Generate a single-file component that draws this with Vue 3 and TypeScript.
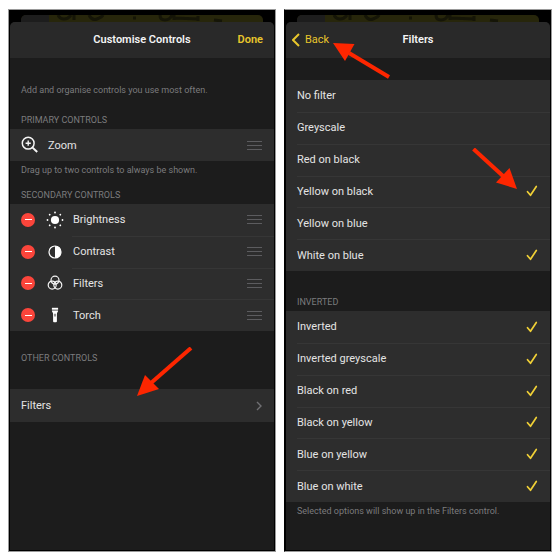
<script setup lang="ts">
import { ref } from 'vue'

interface Control {
  name: string
  icon: 'brightness' | 'contrast' | 'filters' | 'torch'
}

interface FilterOption {
  name: string
  selected: boolean
}

const secondary: Control[] = [
  { name: 'Brightness', icon: 'brightness' },
  { name: 'Contrast', icon: 'contrast' },
  { name: 'Filters', icon: 'filters' },
  { name: 'Torch', icon: 'torch' },
]

const standard = ref<FilterOption[]>([
  { name: 'No filter', selected: false },
  { name: 'Greyscale', selected: false },
  { name: 'Red on black', selected: false },
  { name: 'Yellow on black', selected: true },
  { name: 'Yellow on blue', selected: false },
  { name: 'White on blue', selected: true },
])

const inverted = ref<FilterOption[]>([
  { name: 'Inverted', selected: true },
  { name: 'Inverted greyscale', selected: true },
  { name: 'Black on red', selected: true },
  { name: 'Black on yellow', selected: true },
  { name: 'Blue on yellow', selected: true },
  { name: 'Blue on white', selected: true },
])

const rays = [0, 45, 90, 135, 180, 225, 270, 315]
</script>

<template>
  <main class="page">
    <section class="phone phone-left">
      <div class="backdrop" aria-hidden="true">
        <svg class="backdrop-art" viewBox="0 0 242 8" preserveAspectRatio="none">
          <path d="M0 0h28v8H0z" fill="#1d1d1d" />
          <path d="M37 0q2 4 6 4t7-4M53 0v5M68 0q3 6 8 4t6-4M112 3h3M139 0q0 5 5 5t7-5M153 0v5M153 3l24 1M177 1v5M193 5l8 1" fill="none" stroke="#151507" stroke-width="3" />
        </svg>
      </div>
      <div class="sheet">
        <header class="bar">
          <h1 class="title">Customise Controls</h1>
          <button class="bar-button done" type="button">Done</button>
        </header>

        <p class="note intro">Add and organise controls you use most often.</p>

        <h2 class="label primary-label">Primary controls</h2>
        <div class="group">
          <div class="row single">
            <svg class="zoom-icon" viewBox="0 0 18 18" aria-hidden="true">
              <circle cx="7.2" cy="7.2" r="5.9" />
              <path d="M11.6 11.6l4.6 4.4" stroke-width="2" />
              <path d="M7.2 4.6v5.2M4.6 7.2h5.2" stroke-width="1.4" />
            </svg>
            <span class="name">Zoom</span>
            <button class="grip" type="button" aria-label="Reorder Zoom"><i></i><i></i><i></i></button>
          </div>
        </div>
        <p class="note">Drag up to two controls to always be shown.</p>

        <h2 class="label">Secondary controls</h2>
        <ul class="group secondary">
          <li v-for="c in secondary" :key="c.name" class="row">
            <button class="remove" type="button" :aria-label="'Remove ' + c.name"><i></i></button>
            <svg class="icon" viewBox="0 0 18 18" aria-hidden="true">
              <g v-if="c.icon === 'brightness'" fill="#fff">
                <circle cx="9" cy="9" r="4.1" />
                <circle v-for="a in rays" :key="a" cx="9" cy="1.5" r="0.9" :transform="`rotate(${a} 9 9)`" />
              </g>
              <g v-else-if="c.icon === 'contrast'">
                <circle cx="9" cy="9" r="6" fill="none" stroke="#fff" stroke-width="1.2" />
                <path d="M9 3a6 6 0 0 1 0 12z" fill="#fff" />
              </g>
              <g v-else-if="c.icon === 'filters'" fill="none" stroke="#f4f4f4" stroke-width="1.2">
                <circle cx="9" cy="6.2" r="4" />
                <circle cx="6.2" cy="11.1" r="4" />
                <circle cx="11.8" cy="11.1" r="4" />
              </g>
              <g v-else fill="#fff">
                <path d="M5.900 1.800h6.200v1.900H5.900z" />
                <path d="M5.900 4.500h6.200c0 1.600-1.200 2.100-1.200 3.400v7.400q0 .9-.9.9H8q-.9 0-.9-.9V7.900c0-1.300-1.200-1.800-1.200-3.400z" />
                <path d="M8.500 7.800h1v2.800h-1z" fill="#2d2d2d" />
              </g>
            </svg>
            <span class="name">{{ c.name }}</span>
            <button class="grip" type="button" :aria-label="'Reorder ' + c.name"><i></i><i></i><i></i></button>
          </li>
        </ul>

        <h2 class="label other-label">Other controls</h2>
        <a class="group row link" href="#filters">
          <span class="name">Filters</span>
          <svg class="chevron" viewBox="0 0 6 10" aria-hidden="true"><path d="M1 1l4 4-4 4" /></svg>
        </a>
      </div>
      <svg class="arrow arrow-link" viewBox="0 0 56 50" aria-hidden="true">
        <path class="shaft" d="M54 1L14 36" />
        <path class="head" d="M0 49L8 28l14 14z" />
      </svg>
    </section>

    <section id="filters" class="phone phone-right">
      <div class="backdrop" aria-hidden="true">
        <svg class="backdrop-art" viewBox="0 0 242 8" preserveAspectRatio="none">
          <path d="M0 0h28v8H0z" fill="#1d1d1d" />
          <path d="M37 0q2 4 6 4t7-4M53 0v5M68 0q3 6 8 4t6-4M112 3h3M139 0q0 5 5 5t7-5M153 0v5M153 3l24 1M177 1v5M193 5l8 1" fill="none" stroke="#151507" stroke-width="3" />
        </svg>
      </div>
      <div class="sheet">
        <header class="bar">
          <button class="bar-button back" type="button">
            <svg class="back-icon" viewBox="0 0 8 14" aria-hidden="true"><path d="M7 1L1 7l6 6" /></svg>
            Back
          </button>
          <h1 class="title">Filters</h1>
        </header>

        <ul class="group options first">
          <li v-for="o in standard" :key="o.name" class="row">
            <label class="option">
              <span class="name">{{ o.name }}</span>
              <input v-model="o.selected" class="tick" type="checkbox" />
              <svg v-if="o.selected" class="check" viewBox="0 0 12 12" aria-hidden="true"><path d="M1.500 6.700L4.500 10.300 10.300 1.500" /></svg>
            </label>
          </li>
        </ul>

        <h2 class="label inverted-label">Inverted</h2>
        <ul class="group options">
          <li v-for="o in inverted" :key="o.name" class="row">
            <label class="option">
              <span class="name">{{ o.name }}</span>
              <input v-model="o.selected" class="tick" type="checkbox" />
              <svg v-if="o.selected" class="check" viewBox="0 0 12 12" aria-hidden="true"><path d="M1.500 6.700L4.500 10.300 10.300 1.500" /></svg>
            </label>
          </li>
        </ul>
        <p class="note">Selected options will show up in the Filters control.</p>
      </div>
      <svg class="arrow arrow-back" viewBox="0 0 58 36" aria-hidden="true">
        <path class="shaft" d="M56 34L16 10" />
        <path class="head" d="M0 0l21.500 1L12 18z" />
      </svg>
      <svg class="arrow arrow-check" viewBox="0 0 46 42" aria-hidden="true">
        <path class="shaft" d="M1.500 1L31 28" />
        <path class="head" d="M45 41L37.500 20 24 34.500z" />
      </svg>
    </section>
  </main>
</template>

<style>
body {
  margin: 0;
  background: #fff;
}
</style>

<style scoped>
.page {
  box-sizing: border-box;
  min-height: 100vh;
  padding: 9px 8px 8px;
  display: grid;
  grid-template-columns: 1fr 1fr;
  gap: 8px;
  font-family: Roboto, "Liberation Sans", sans-serif;
  font-size: 11px;
  line-height: 14px;
  color: #e4e4e4;
}

h1, h2, p, ul {
  margin: 0;
  padding: 0;
  font-size: inherit;
  font-weight: 400;
}

ul {
  list-style: none;
}

button {
  padding: 0;
  border: 0;
  background: none;
  font: inherit;
  color: inherit;
}

.phone {
  position: relative;
  box-sizing: border-box;
  display: flex;
  flex-direction: column;
  background: #000;
  border: 1px solid #999;
  padding: 5px 1px 1px;
}

.phone-right {
  border-left-color: #000;
}

.backdrop {
  height: 7px;
  margin: 0 11px;
  border-radius: 5px 5px 0 0;
  background: #27260b;
  overflow: hidden;
}

.backdrop-art {
  display: block;
  width: 100%;
  height: 8px;
}

.sheet {
  flex: 1;
  border-radius: 5px 5px 0 0;
  background: #1c1c1c;
  overflow: hidden;
}

.bar {
  height: 36px;
  padding: 0 11px;
  display: grid;
  grid-template-columns: 1fr auto 1fr;
  align-items: center;
  background: #292929;
}

.title {
  grid-column: 2;
  font-weight: 600;
  color: #f4f4f4;
}

.bar-button {
  color: #e8c62c;
}

.done {
  justify-self: end;
  font-weight: 600;
}

.back {
  justify-self: start;
  display: flex;
  align-items: center;
  gap: 5px;
  grid-row: 1;
}

.phone-right .bar {
  padding: 0 6px;
}

.back-icon {
  width: 8px;
  height: 14px;
  fill: none;
  stroke: #e8c62c;
  stroke-width: 2;
}

.note,
.label {
  padding: 0 11px;
  font-size: 9px;
  line-height: 12px;
  color: #7b7b7d;
}

.note {
  padding-top: 3px;
}

.intro {
  padding-top: 26px;
}

.label {
  padding-top: 13px;
  padding-bottom: 3px;
  text-transform: uppercase;
}

.primary-label {
  padding-top: 18px;
}

.other-label {
  padding-top: 21px;
  padding-bottom: 25px;
}

.inverted-label {
  padding-top: 25px;
}

.group {
  background: #2d2d2d;
}

.secondary,
.options {
  display: grid;
  grid-auto-rows: 1fr;
}

.secondary {
  min-height: 127px;
}

.options {
  min-height: 191px;
}

.first {
  margin-top: 22px;
}

.row {
  display: flex;
  align-items: center;
  padding: 0 12px 0 11px;
}

.secondary .row + .row {
  background: linear-gradient(#363636, #363636) no-repeat 62px 0 / 100% 1px;
}

.options .row + .row {
  background: linear-gradient(#363636, #363636) no-repeat 11px 0 / 100% 1px;
}

.single {
  min-height: 32px;
}

.link {
  min-height: 33px;
  color: inherit;
  text-decoration: none;
}

.name {
  flex: 1;
  padding-top: 1px;
}

.zoom-icon {
  width: 18px;
  height: 18px;
  margin-right: 9px;
  fill: none;
  stroke: #f4f4f4;
  stroke-width: 1.5;
}

.remove {
  width: 14px;
  height: 14px;
  border-radius: 50%;
  background: #fb453b;
  display: grid;
  place-items: center;
}

.remove i {
  width: 7px;
  height: 1px;
  background: #fff;
}

.icon {
  width: 18px;
  height: 18px;
  margin: 0 9px 0 11px;
}

.grip {
  width: 15px;
  height: 9px;
  display: flex;
  flex-direction: column;
  justify-content: space-between;
}

.grip i {
  width: 100%;
  height: 1px;
  background: #5c5c5f;
}

.chevron {
  width: 6px;
  height: 10px;
  fill: none;
  stroke: #707073;
  stroke-width: 1.4;
}

.option {
  flex: 1;
  display: grid;
  grid-template-columns: 1fr 12px;
  align-items: center;
}

.tick {
  grid-area: 1 / 2;
  width: 12px;
  height: 12px;
  margin: 0;
  appearance: none;
}

.check {
  grid-area: 1 / 2;
  width: 12px;
  height: 12px;
  fill: none;
  stroke: #f0d036;
  stroke-width: 1.7;
  stroke-linecap: round;
  stroke-linejoin: round;
  pointer-events: none;
}

.arrow {
  position: absolute;
  pointer-events: none;
}

.shaft {
  fill: none;
  stroke: #fd2600;
  stroke-width: 4;
}

.head {
  fill: #fd2600;
}

.arrow-link {
  left: 128px;
  top: 337px;
  width: 56px;
  height: 50px;
}

.arrow-back {
  left: 48px;
  top: 33px;
  width: 58px;
  height: 36px;
}

.arrow-check {
  right: 33px;
  top: 138px;
  width: 46px;
  height: 42px;
}
</style>
